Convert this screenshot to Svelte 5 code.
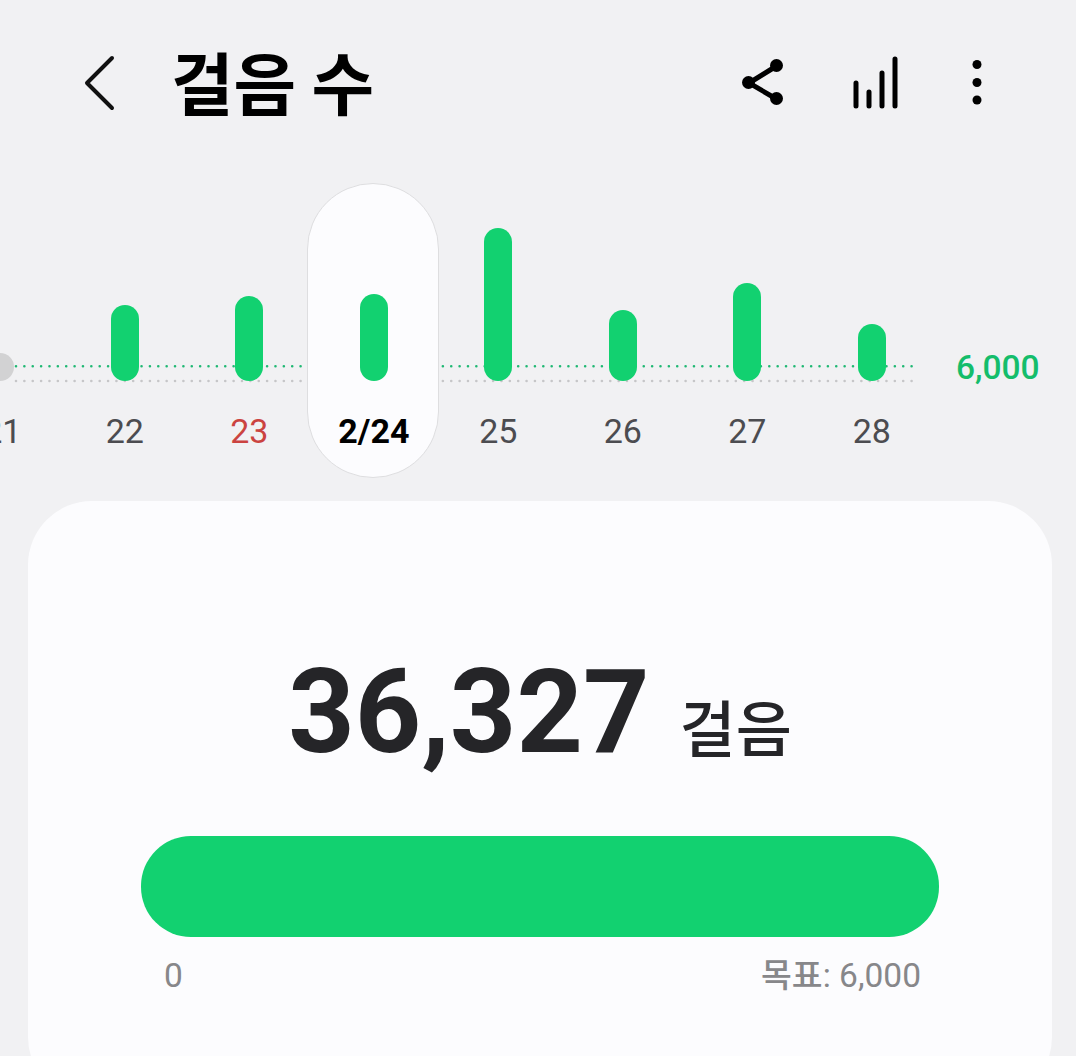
<script>
	const days = [
		{ label: '21', height: 28, tone: 'off' },
		{ label: '22', height: 76 },
		{ label: '23', height: 85, tone: 'holiday' },
		{ label: '2/24', height: 87, tone: 'current' },
		{ label: '25', height: 153 },
		{ label: '26', height: 71 },
		{ label: '27', height: 98 },
		{ label: '28', height: 57 }
	];
</script>

<div class="screen">
	<header class="top">
		<div class="lead">
			<svg class="back" width="32" height="56" viewBox="0 0 32 56" aria-hidden="true">
				<path d="M28 3 L3 28 L28 53" />
			</svg>
			<h1>걸음 수</h1>
		</div>
		<div class="actions">
			<svg width="44" height="48" viewBox="0 0 44 48" aria-hidden="true">
				<path class="link" d="M35.5 7 L8 24 L35.5 40" />
				<circle cx="35.5" cy="6.5" r="6.5" />
				<circle cx="7.5" cy="23.5" r="6.5" />
				<circle cx="35.5" cy="39.5" r="6.5" />
			</svg>
			<svg width="48" height="54" viewBox="0 0 48 54" aria-hidden="true">
				<path class="bars" d="M4 27 V50 M17 36 V50 M30 17 V50 M43 3 V50" />
			</svg>
			<svg class="more" width="14" height="48" viewBox="0 0 14 48" aria-hidden="true">
				<circle cx="7" cy="5.5" r="4.5" />
				<circle cx="7" cy="23.5" r="4.5" />
				<circle cx="7" cy="41" r="4.5" />
			</svg>
		</div>
	</header>

	<section class="chart">
		<svg class="lines" width="900" height="24" viewBox="0 0 900 24" aria-hidden="true">
			<line class="goal-line" x1="2" y1="4.3" x2="899" y2="4.3" />
			<line class="base-line" x1="2" y1="19" x2="899" y2="19" />
		</svg>
		<div class="days">
			{#each days as day}
				<div class="day {day.tone ?? ''}">
					<div class="plot"><span class="bar" style={`height:${day.height}px`}></span></div>
					<span class="label">{day.label}</span>
				</div>
			{/each}
		</div>
		<span class="goal">6,000</span>
	</section>

	<section class="card">
		<div class="total">
			<strong>36,327</strong>
			<span>걸음</span>
		</div>
		<div class="progress"></div>
		<div class="scale">
			<span>0</span>
			<span>목표: 6,000</span>
		</div>
	</section>
</div>

<style>
	:global(body) {
		background: #f1f1f3;
	}
	.screen {
		width: 1076px;
		height: 1056px;
		overflow: hidden;
		background: #f1f1f3;
		font-family: Roboto, 'Noto Sans CJK KR', sans-serif;
	}
	.top {
		display: flex;
		align-items: center;
		justify-content: space-between;
		height: 165px;
		padding: 0 92px 0 84px;
		box-sizing: border-box;
	}
	.lead {
		display: flex;
		align-items: center;
		gap: 55px;
	}
	.back {
		fill: none;
		stroke: #111;
		stroke-width: 4;
		stroke-linecap: round;
		stroke-linejoin: round;
	}
	h1 {
		margin: -3px 0 0;
		font-family: 'Noto Sans CJK KR', sans-serif;
		font-size: 68px;
		font-weight: 700;
		line-height: 1;
		color: #000;
	}
	.actions {
		display: flex;
		align-items: center;
		gap: 67px;
	}
	.actions svg {
		fill: #000;
	}
	.more {
		margin-left: 3px;
	}
	.link {
		fill: none;
		stroke: #000;
		stroke-width: 5;
	}
	.bars {
		fill: none;
		stroke: #000;
		stroke-width: 5;
		stroke-linecap: round;
	}
	.chart {
		position: relative;
		height: 336px;
	}
	.lines {
		position: absolute;
		left: 14px;
		top: 197px;
	}
	.lines line {
		stroke-width: 2.6;
		stroke-linecap: round;
		stroke-dasharray: 0 8.37;
	}
	.goal-line {
		stroke: #1fb873;
	}
	.base-line {
		stroke: #c6c6c8;
	}
	.goal {
		position: absolute;
		left: 956px;
		top: 183px;
		font-size: 33.5px;
		font-weight: 500;
		line-height: 40px;
		color: #14bd6b;
	}
	.days {
		display: grid;
		grid-template-columns: repeat(8, 124.5px);
		margin-left: -61.9px;
		position: relative;
	}
	.day {
		position: relative;
		display: flex;
		flex-direction: column;
		align-items: center;
		padding-top: 18px;
	}
	.current::before {
		content: '';
		position: absolute;
		top: 18px;
		left: -4.4px;
		width: 132px;
		height: 295px;
		box-sizing: border-box;
		border: 1px solid #dedee0;
		border-radius: 66px;
		background: #fcfcfe;
	}
	.plot {
		position: relative;
		display: flex;
		align-items: flex-end;
		height: 198px;
	}
	.bar {
		width: 28px;
		border-radius: 14px;
		background: #12d170;
	}
	.off .bar {
		background: #d2d2d3;
	}
	.label {
		position: relative;
		margin-top: 30px;
		font-size: 34px;
		font-weight: 450;
		line-height: 40px;
		color: #4c4c50;
	}
	.off .label {
		left: 2px;
	}
	.holiday .label {
		color: #cb4340;
	}
	.current .label {
		font-weight: 700;
		color: #000;
	}
	.card {
		margin: 0 24px 0 28px;
		height: 600px;
		box-sizing: border-box;
		padding: 146px 113px 0;
		background: #fcfcfe;
		border-radius: 64px;
	}
	.total {
		display: flex;
		align-items: baseline;
		justify-content: center;
		gap: 30px;
		color: #252528;
		height: 189px;
	}
	.total strong {
		font-size: 116px;
		font-weight: 700;
		line-height: 130px;
	}
	.total span {
		font-family: 'Noto Sans CJK KR', sans-serif;
		font-size: 61px;
		font-weight: 500;
		line-height: 1;
	}
	.progress {
		height: 101px;
		border-radius: 50px;
		background: #12d170;
	}
	.scale {
		display: flex;
		justify-content: space-between;
		padding: 19px 18px 0 23px;
		font-size: 33.5px;
		font-weight: 450;
		line-height: 40px;
		color: #87878a;
	}
</style>
